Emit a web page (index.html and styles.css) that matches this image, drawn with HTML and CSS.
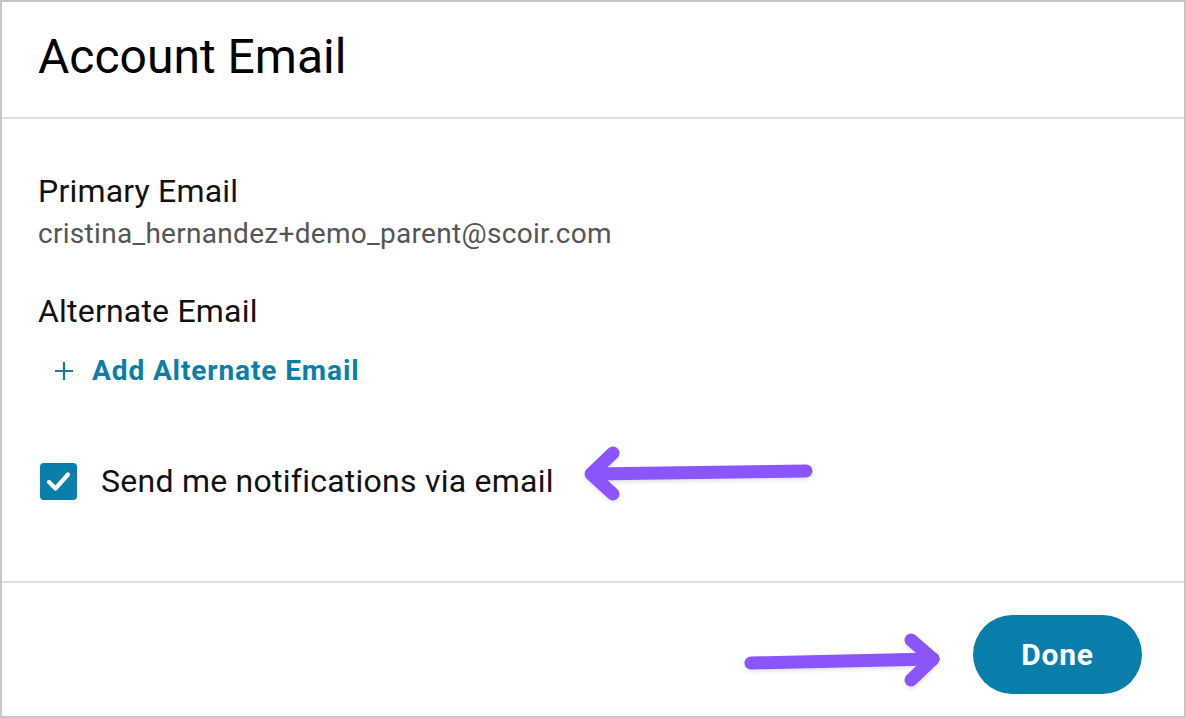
FILE: index.html
```html
<!DOCTYPE html>
<html lang="en">
<head>
<meta charset="utf-8">
<title>Account Email</title>
<link rel="stylesheet" href="styles.css">
</head>
<body>
<div class="dialog">
  <header class="header">
    <h1 class="title">Account Email</h1>
  </header>
  <main class="content">
    <div class="label">Primary Email</div>
    <div class="email">cristina_hernandez+demo_parent@scoir.com</div>
    <div class="label alt-label">Alternate Email</div>
    <a class="add-link" href="#">
      <svg class="plus" width="20" height="20" viewBox="0 0 20 20" aria-hidden="true"><path d="M10 1v18M1 10h18" stroke="#0a7ea9" stroke-width="2.2" fill="none"/></svg>
      <span>Add Alternate Email</span>
    </a>
    <label class="check-row">
      <span class="checkbox">
        <svg width="37" height="37" viewBox="0 0 37 37" aria-hidden="true"><path d="M9 19l6.5 6.5 12.5-14" stroke="#fff" stroke-width="4.2" fill="none" stroke-linecap="round" stroke-linejoin="round"/></svg>
      </span>
      <span class="check-text">Send me notifications via email</span>
    </label>
  </main>
  <footer class="footer">
    <button class="done">Done</button>
  </footer>
  <svg class="annotations" width="1186" height="718" viewBox="0 0 1186 718" aria-hidden="true">
    <defs>
      <filter id="sh" x="-10%" y="-50%" width="120%" height="200%">
        <feDropShadow dx="0" dy="2" stdDeviation="2" flood-color="#000" flood-opacity="0.12"/>
      </filter>
    </defs>
    <g stroke="#8b55fd" stroke-width="13" stroke-linecap="round" stroke-linejoin="round" fill="none" filter="url(#sh)">
      <path d="M806 471 L592 474"/>
      <path d="M613 453 L591 474 L613 494"/>
      <path d="M751 663 L933 659"/>
      <path d="M911 640 L933 659 L911 680"/>
    </g>
  </svg>
</div>
</body>
</html>
```

FILE: styles.css
```css
* { box-sizing: border-box; }
html, body { margin: 0; padding: 0; background: #fff; }
body { font-family: Roboto, "Noto Sans", "Liberation Sans", sans-serif; color: #111; }

.dialog {
  position: relative;
  width: 1186px;
  height: 718px;
  border: 2px solid #c6c6c6;
  display: flex;
  flex-direction: column;
  overflow: hidden;
}

.header {
  height: 117px;
  padding: 27px 36px 0;
  border-bottom: 2px solid #e0e0e0;
}
.title {
  margin: 0;
  font-size: 48px;
  line-height: 56px;
  font-weight: 400;
  color: #000;
}

.content {
  flex: 1;
  padding: 52px 36px 0;
  display: flex;
  flex-direction: column;
  align-items: flex-start;
}
.label {
  font-size: 32px;
  line-height: 40px;
  letter-spacing: 0.2px;
  color: #111;
}
.email {
  margin-top: 5px;
  font-size: 28px;
  line-height: 36px;
  letter-spacing: 0.3px;
  color: #555;
}
.alt-label { margin-top: 39px; }

.add-link {
  margin-top: 22px;
  margin-left: 16px;
  display: flex;
  align-items: center;
  gap: 18px;
  text-decoration: none;
  color: #0a7ea9;
  font-size: 28px;
  line-height: 36px;
  font-weight: 700;
  letter-spacing: 0.9px;
}
.plus { display: block; }

.check-row {
  margin-top: 72px;
  display: flex;
  align-items: center;
  gap: 24px;
  margin-left: 2px;
}
.checkbox {
  width: 37px;
  height: 37px;
  border-radius: 4px;
  background: #0a7eab;
  display: block;
}
.checkbox svg { display: block; }
.check-text {
  font-size: 32px;
  line-height: 40px;
  letter-spacing: 0.25px;
  color: #111;
}

.footer {
  height: 135px;
  border-top: 2px solid #e0e0e0;
  display: flex;
  justify-content: flex-end;
  align-items: flex-start;
  padding: 32px 42px 0 0;
}
.done {
  width: 169px;
  height: 79px;
  border: none;
  border-radius: 40px;
  background: #0a7eab;
  color: #fff;
  font-family: Roboto, "Noto Sans", "Liberation Sans", sans-serif;
  font-size: 30px;
  font-weight: 700;
  letter-spacing: 0.8px;
  cursor: pointer;
}

.annotations {
  position: absolute;
  left: -2px;
  top: -2px;
  pointer-events: none;
}
```
